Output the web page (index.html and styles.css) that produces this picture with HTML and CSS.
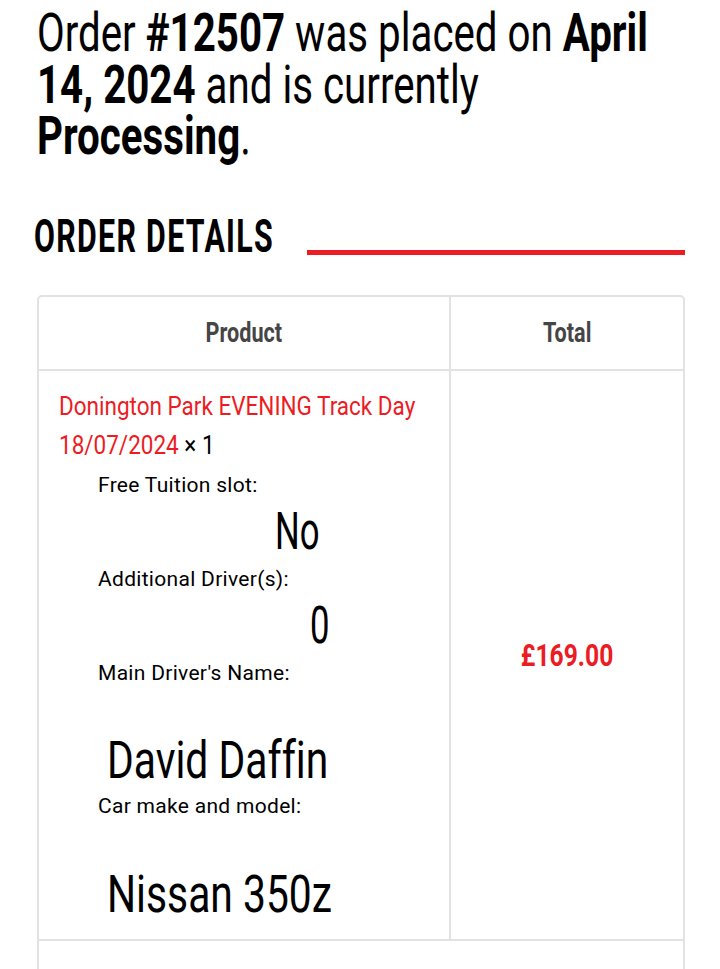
FILE: index.html
```html
<!DOCTYPE html>
<html lang="en">
<head>
    <meta charset="UTF-8">
    <meta name="viewport" content="width=device-width, initial-scale=1.0">
    <title>Order #12507</title>
    <link rel="stylesheet" href="styles.css">
</head>
<body>
    <div class="wrapper">
        <p class="order-status">Order <strong>#12507</strong> was placed on <strong>April 14, 2024</strong> and is currently <strong>Processing</strong>.</p>

        <section class="order-details">
            <div class="section-title">
                <h2><span class="condensed">Order details</span></h2>
                <span class="title-rule"></span>
            </div>

            <table class="order-table">
                <colgroup>
                    <col class="col-product">
                    <col class="col-total">
                </colgroup>
                <thead>
                    <tr>
                        <th><span class="th-label">Product</span></th>
                        <th><span class="th-label">Total</span></th>
                    </tr>
                </thead>
                <tbody>
                    <tr>
                        <td class="product-name">
                            <div class="product-title">
                                <a href="#">Donington Park EVENING Track Day 18/07/2024</a> <span class="qty">&times;&nbsp;1</span>
                            </div>
                            <ul class="item-meta">
                                <li>
                                    <span class="meta-label">Free Tuition slot:</span>
                                    <p class="meta-value value-no"><span>No</span></p>
                                </li>
                                <li>
                                    <span class="meta-label">Additional Driver(s):</span>
                                    <p class="meta-value value-zero"><span>0</span></p>
                                </li>
                                <li>
                                    <span class="meta-label">Main Driver's Name:</span>
                                    <p class="meta-value value-text"><span>David Daffin</span></p>
                                </li>
                                <li>
                                    <span class="meta-label">Car make and model:</span>
                                    <p class="meta-value value-text"><span>Nissan 350z</span></p>
                                </li>
                            </ul>
                        </td>
                        <td class="product-total"><span class="amount">&pound;169.00</span></td>
                    </tr>
                </tbody>
                <tfoot>
                    <tr>
                        <td colspan="2"></td>
                    </tr>
                </tfoot>
            </table>
        </section>
    </div>
</body>
</html>
```

FILE: styles.css
```css
body {
    margin: 0;
    color: #000;
    background-color: #fff;
    font-family: Roboto, "Liberation Sans", sans-serif;
    font-variant-ligatures: none;
    overflow-x: hidden;
}
.wrapper {
    padding: 0 35px 0 37px;
}

/* no condensed face installed, so the big texts are squeezed with scaleX */
.order-status {
    width: 852px;
    margin: 0;
    padding-top: 8px;
    font-size: 53px;
    line-height: 51.5px;
    transform: scaleX(0.76);
    transform-origin: 0 0;
}
.order-status strong {
    font-weight: 700;
}
.order-details {
    margin-top: 50px;
}
.section-title {
    display: flex;
    align-items: flex-end;
}
.section-title h2 {
    flex: 0 0 273px;
    min-width: 0;
    margin: 0 0 0 -3px;
    font-size: 46px;
    line-height: 46px;
    font-weight: 700;
    letter-spacing: 2px;
    text-transform: uppercase;
    white-space: nowrap;
}
.condensed {
    display: inline-block;
    transform: scaleX(0.66);
    transform-origin: 0 50%;
}
.title-rule {
    flex: 1;
    height: 5px;
    margin-bottom: 4px;
    background-color: #ec1c24;
}
.order-table {
    width: 648px;
    margin-top: 36px;
    table-layout: fixed;
    border-collapse: separate;
    border-spacing: 0;
    border: 2px solid #e2e2e2;
    border-radius: 5px;
}
.col-product {
    width: 412px;
}
.col-total {
    width: 232px;
}
.order-table th,
.order-table td {
    padding: 0;
    border-right: 2px solid #e2e2e2;
    border-bottom: 2px solid #e2e2e2;
}
.order-table th:last-child,
.order-table td:last-child {
    border-right: none;
}
.order-table th {
    height: 72px;
    font-size: 27px;
    font-weight: 700;
    color: #454545;
    text-align: center;
}
.th-label {
    display: inline-block;
    transform: scaleX(0.8);
}
.order-table td.product-name {
    padding: 16px 19px 14px 20px;
    vertical-align: top;
}
.product-title {
    width: 413px;
    font-size: 25px;
    line-height: 39px;
    transform: scaleX(0.9);
    transform-origin: 0 0;
}
.product-title a {
    color: #ec1c24;
    text-decoration: none;
}
.item-meta {
    list-style: none;
    margin: 5px 0 0 0;
    padding: 0 0 0 39px;
}
.meta-label {
    display: block;
    font-size: 21px;
    line-height: 30px;
    letter-spacing: 0.3px;
}
.meta-value {
    margin: 0;
    font-size: 51px;
    line-height: 64px;
}
.meta-value span {
    display: inline-block;
    transform-origin: 0 50%;
}
.value-no {
    padding-left: 177px;
}
.value-zero {
    padding-left: 212px;
}
.value-no span,
.value-zero span {
    transform: scaleX(0.68);
}
.value-text {
    padding: 43.5px 0 0 9px;
    line-height: 60px;
}
.value-text span {
    transform: scaleX(0.8);
}
.order-table td.product-total {
    text-align: center;
    vertical-align: middle;
}
.amount {
    display: inline-block;
    color: #ec1c24;
    font-size: 32px;
    line-height: 40px;
    font-weight: 700;
    transform: scaleX(0.77);
}
.order-table tfoot td {
    height: 60px;
    border-bottom: none;
}
```
